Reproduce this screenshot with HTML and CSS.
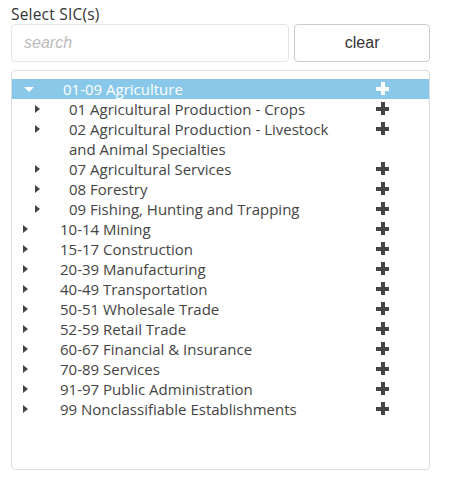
FILE: index.html
```html
<!DOCTYPE html>
<html>
<head>
<meta charset="utf-8">
<link rel="stylesheet" href="styles.css">
</head>
<body>
<div class="panel">
  <div class="label">Select SIC(s)</div>
  <div class="controls">
    <input class="search" type="text" placeholder="search">
    <button class="clear">clear</button>
  </div>
  <div class="tree">
    <div class="row top selected">
      <span class="caret down"></span><span class="text">01-09 Agriculture</span><span class="plus"></span>
    </div>
    <div class="row child"><span class="caret"></span><span class="text">01 Agricultural Production - Crops</span><span class="plus"></span></div>
    <div class="row child"><span class="caret"></span><span class="text">02 Agricultural Production - Livestock and Animal Specialties</span><span class="plus"></span></div>
    <div class="row child"><span class="caret"></span><span class="text">07 Agricultural Services</span><span class="plus"></span></div>
    <div class="row child"><span class="caret"></span><span class="text">08 Forestry</span><span class="plus"></span></div>
    <div class="row child"><span class="caret"></span><span class="text">09 Fishing, Hunting and Trapping</span><span class="plus"></span></div>
    <div class="row top"><span class="caret"></span><span class="text">10-14 Mining</span><span class="plus"></span></div>
    <div class="row top"><span class="caret"></span><span class="text">15-17 Construction</span><span class="plus"></span></div>
    <div class="row top"><span class="caret"></span><span class="text">20-39 Manufacturing</span><span class="plus"></span></div>
    <div class="row top"><span class="caret"></span><span class="text">40-49 Transportation</span><span class="plus"></span></div>
    <div class="row top"><span class="caret"></span><span class="text">50-51 Wholesale Trade</span><span class="plus"></span></div>
    <div class="row top"><span class="caret"></span><span class="text">52-59 Retail Trade</span><span class="plus"></span></div>
    <div class="row top"><span class="caret"></span><span class="text">60-67 Financial &amp; Insurance</span><span class="plus"></span></div>
    <div class="row top"><span class="caret"></span><span class="text">70-89 Services</span><span class="plus"></span></div>
    <div class="row top"><span class="caret"></span><span class="text">91-97 Public Administration</span><span class="plus"></span></div>
    <div class="row top"><span class="caret"></span><span class="text">99 Nonclassifiable Establishments</span><span class="plus"></span></div>
  </div>
</div>
</body>
</html>
```
FILE: styles.css
```css
html, body { margin: 0; padding: 0; background: #fff; }
.panel {
  padding: 5px 19px 0 11px;
  width: 419px;
  font-family: "Open Sans", "Noto Sans", sans-serif;
  color: #444;
}
.label {
  font-size: 15.5px;
  letter-spacing: 0.2px;
  line-height: 19px;
  height: 19px;
  color: #333;
}
.controls {
  display: flex;
  gap: 5px;
  height: 38px;
}
.search {
  box-sizing: border-box;
  width: 279px;
  height: 38px;
  margin: 0;
  border: 1px solid #e6e6e6;
  border-radius: 4px;
  padding: 0 12px;
  font-family: "Liberation Sans", Arial, sans-serif;
  font-size: 16px;
  outline: none;
}
.search::placeholder { color: #bbb; font-style: italic; }
.clear {
  box-sizing: border-box;
  width: 136px;
  height: 38px;
  margin: 0;
  border: 1px solid #ccc;
  border-radius: 4px;
  background: #fff;
  font-family: "Liberation Sans", Arial, sans-serif;
  font-size: 16px;
  color: #333;
}
.tree {
  box-sizing: border-box;
  margin-top: 8px;
  height: 400px;
  border: 1px solid #ddd;
  border-radius: 4px;
  padding-top: 8px;
}
.row {
  display: flex;
  align-items: flex-start;
  font-size: 15px;
  line-height: 20px;
}
.row .caret {
  flex: none;
  width: 0; height: 0;
  margin-top: 6px;
  border-top: 4px solid transparent;
  border-bottom: 4px solid transparent;
  border-left: 5px solid #444;
}
.row.top .caret { margin-left: 11px; margin-right: 32px; }
.row.child .caret { margin-left: 23px; margin-right: 29px; }
.row .caret.down {
  margin-top: 8px;
  border-left: 5px solid transparent;
  border-right: 5px solid transparent;
  border-top: 5px solid #fff;
  border-bottom: 0;
  margin-left: 12px;
  margin-right: 29px;
}
.row .text { flex: 1; }
.row.child .text { padding-right: 20px; }
.row .plus {
  flex: none;
  position: relative;
  width: 13px;
  height: 13px;
  margin-top: 3px;
  margin-right: 40px;
}
.row .plus::before, .row .plus::after {
  content: "";
  position: absolute;
  background: #444;
}
.row .plus::before { left: 0; top: 4.5px; width: 13px; height: 4px; }
.row .plus::after { top: 0; left: 4.5px; width: 4px; height: 13px; }
.row.selected { background: #89c8e8; color: #fff; }
.row.selected .plus::before, .row.selected .plus::after { background: #fff; }
```
